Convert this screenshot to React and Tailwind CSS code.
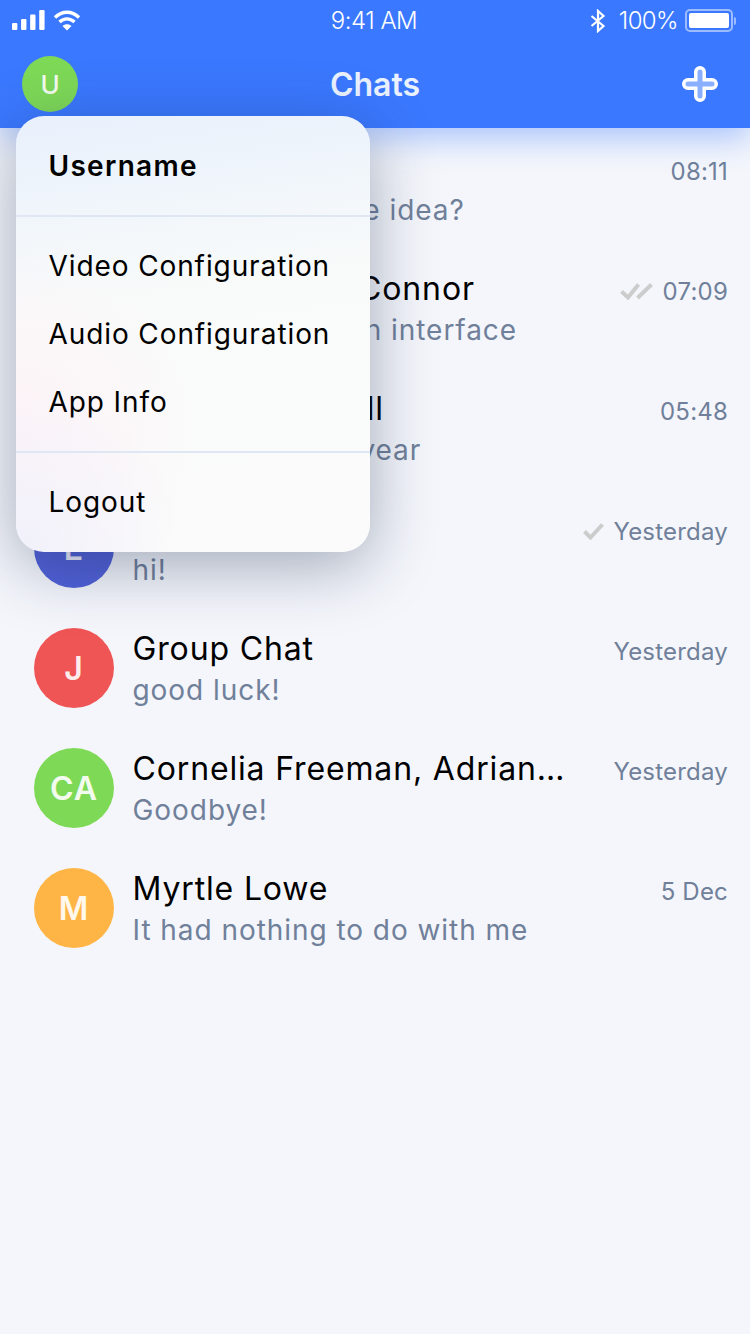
import React from 'react';

const chats = [
    { id: 1, initials: 'A', color: 'bg-[#7ed957]', name: 'Alice Barnes', text: 'Do you all get the idea?', time: '08:11' },
    { id: 2, initials: 'S', color: 'bg-[#ffb545]', name: 'Christian-Lee Connor', text: "I'd like the design interface", time: '07:09', ticks: 2 },
    { id: 3, initials: 'R', color: 'bg-[#ef5555]', name: 'Joseph Mitchell', text: "Let's meet next year", time: '05:48' },
    { id: 4, initials: 'E', color: 'bg-[#5060d8]', name: 'Emma Wood', text: 'hi!', time: 'Yesterday', ticks: 1 },
    { id: 5, initials: 'J', color: 'bg-[#ef5555]', name: 'Group Chat', text: 'good luck!', time: 'Yesterday' },
    { id: 6, initials: 'CA', color: 'bg-[#7ed957]', name: 'Cornelia Freeman, Adrian…', text: 'Goodbye!', time: 'Yesterday' },
    { id: 7, initials: 'M', color: 'bg-[#ffb545]', name: 'Myrtle Lowe', text: 'It had nothing to do with me', time: '5 Dec' },
];

const StatusBar = () => (
    <div className="flex h-10 items-center justify-between pl-3 pr-[14px] pt-[1px] text-white">
        <div className="flex w-[200px] items-center gap-[8px]">
            <svg width="33" height="20" viewBox="0 0 40 20" fill="white" className="mt-[-1px]" preserveAspectRatio="none">
                <rect x="0" y="13" width="6.5" height="7" rx="1.2" />
                <rect x="11" y="9" width="6.5" height="11" rx="1.2" />
                <rect x="22" y="4.5" width="6.5" height="15.5" rx="1.2" />
                <rect x="33" y="0" width="6.5" height="20" rx="1.2" />
            </svg>
            <svg width="28" height="21" viewBox="0 0 28 21" fill="none" stroke="white" strokeWidth="3.4" className="mt-[-1px]">
                <path d="M2 7.5 C9 0.5 19 0.5 26 7.5" />
                <path d="M6.5 12 C11 7.8 17 7.8 21.5 12" />
                <path d="M14 20.5 L9.5 16 C12 13.8 16 13.8 18.5 16 Z" fill="white" stroke="none" />
            </svg>
        </div>
        <span className="text-[24px] font-light tracking-[-0.5px]">9:41 AM</span>
        <div className="flex w-[200px] items-center justify-end">
            <svg width="16" height="24" viewBox="0 0 16 24" fill="none" stroke="white" strokeWidth="2.2" className="mr-[13px]">
                <path d="M1.5 7 L13.5 17 L8 22 V2 L13.5 7 L1.5 17" />
            </svg>
            <span className="mr-[7px] text-[24px] font-light tracking-[-0.6px]">100%</span>
            <div className="flex h-[23px] w-[48px] items-center rounded-[5px] border-2 border-white/50 p-[2px]">
                <div className="h-full w-full rounded-[2px] bg-white" />
            </div>
            <div className="ml-[1px] h-[8px] w-[2px] rounded-r-full bg-white/50" />
        </div>
    </div>
);

const Ticks = ({ count }) => (
    <svg width={count === 2 ? 33 : 21} height="17" viewBox={count === 2 ? '0 0 33 17' : '0 0 21 17'} fill="none" strokeWidth="4" className="mr-[10px]">
        {count === 2 ? (
            <>
                <path d="M1.5 8.5 L8 14.5 L18.5 1.5" stroke="#cccccc" />
                <path d="M17.5 15 L31.5 1.5" stroke="#cccccc" />
            </>
        ) : (
            <path d="M1.5 8.5 L7.5 14.5 L19.5 1.5" stroke="#cccccc" />
        )}
    </svg>
);

const ChatRow = ({ chat }) => (
    <div className="flex h-[120px] items-center pl-[34px] pr-[22px]">
        <div className={`flex h-20 w-20 shrink-0 items-center justify-center rounded-full pt-[1px] text-[32px] font-semibold tracking-[1px] text-white/90 ${chat.color}`}>
            {chat.initials}
        </div>
        <div className="ml-[18.5px] min-w-0 flex-1 pt-[2px]">
            <div className="flex items-start justify-between">
                <div className="min-w-0 truncate text-[32px] leading-10 tracking-[0.85px] text-black">{chat.name}</div>
                <div className="ml-[8px] mt-[3px] flex h-10 shrink-0 items-center text-[24px] tracking-[0.2px] text-[#70809a]">
                    {chat.ticks ? <Ticks count={chat.ticks} /> : null}
                    {chat.time}
                </div>
            </div>
            <div className="mt-[-2px] truncate text-[28px] leading-10 tracking-[0.95px] text-[#70809a]">{chat.text}</div>
        </div>
    </div>
);

const MenuItem = ({ children }) => (
    <div className="flex h-[68px] items-center pl-[32.5px] text-[28px] tracking-[0.9px] text-black">{children}</div>
);

const App = () => {
    return (
        <div className="relative h-[1334px] w-[750px] overflow-hidden bg-[#f4f6fb] font-['Inter',sans-serif]">
            <div className="relative z-10 h-32 bg-[#3a78ff] shadow-[0_10px_30px_rgba(58,120,255,0.4)]">
                <StatusBar />
                <div className="relative flex h-[88px] items-center justify-center pt-[2px]">
                    <div className="absolute left-[22px] top-4 flex h-14 w-14 items-center justify-center rounded-full bg-[#7ed957] text-[26px] font-medium text-white/90">U</div>
                    <span className="text-[32px] font-semibold text-white/90">Chats</span>
                    <svg width="36" height="36" viewBox="0 0 36 36" fill="none" className="absolute left-[682px] top-[26px]">
                        <path d="M18 6 V30 M6 18 H30" stroke="white" strokeWidth="12" strokeLinecap="round" />
                        <path d="M18 6 V30 M6 18 H30" stroke="#8aafff" strokeWidth="5" strokeLinecap="round" />
                    </svg>
                </div>
            </div>

            <div>
                {chats.map((chat) => (
                    <ChatRow key={chat.id} chat={chat} />
                ))}
            </div>

            {/* dropdown sits over the list */}
            <div className="absolute left-4 top-[116px] z-20 w-[354px] overflow-hidden rounded-[28px] bg-[radial-gradient(circle_at_0%_100%,#f1f1fb_0%,transparent_30%),radial-gradient(circle_at_0%_72%,#fdf3f7_0%,transparent_40%),linear-gradient(172deg,#e8f0fc_0%,#f1f6fb_22%,#f9fbfa_42%,#fbfbfb_100%)] shadow-[0_14px_64px_rgba(30,45,80,0.38)]">
                <div className="flex h-[99px] items-center pl-[32.5px] text-[28px] font-semibold tracking-[1.3px] text-black">Username</div>
                <div className="h-[2px] bg-[#dfe7f5]" />
                <div className="py-[15px]">
                    <MenuItem>Video Configuration</MenuItem>
                    <MenuItem>Audio Configuration</MenuItem>
                    <MenuItem>App Info</MenuItem>
                </div>
                <div className="h-[2px] bg-[#dfe7f5]" />
                <div className="flex h-[99px] items-center pb-[2px] pl-[32.5px] text-[28px] tracking-[0.9px] text-black">Logout</div>
            </div>
        </div>
    );
};

export default App;
